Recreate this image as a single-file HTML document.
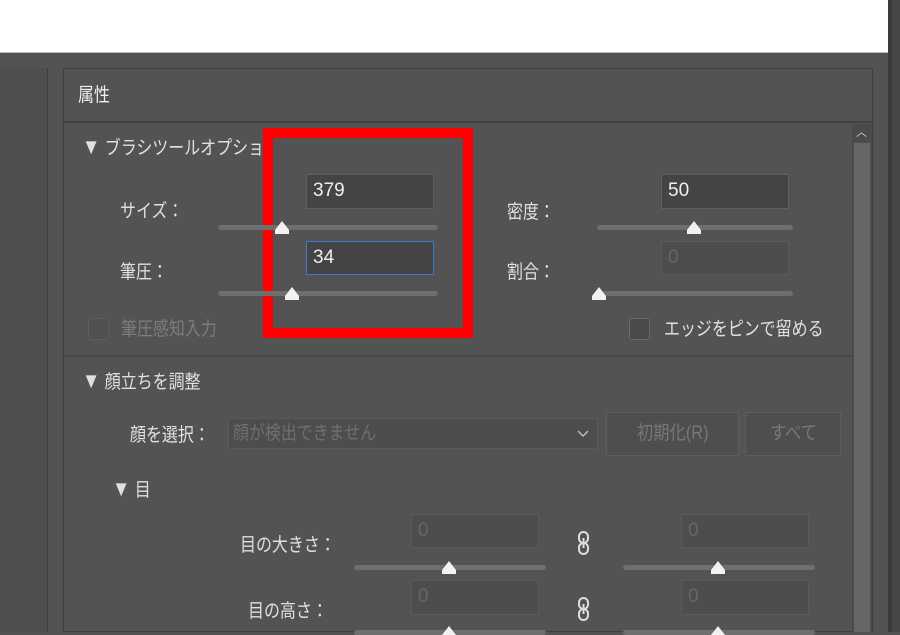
<!DOCTYPE html>
<html><head><meta charset="utf-8"><style>
body{margin:0;width:900px;height:632px;overflow:hidden;background:#535353;position:relative;font-family:"Liberation Sans","Noto Sans CJK JP",sans-serif;color:#e0e0e0;}
.a{position:absolute}
.t{position:absolute;font-size:19px;line-height:20px;white-space:nowrap;transform:scaleX(0.84);transform-origin:0 0}
.in{position:absolute;background:#444;border:1px solid #5f5f5f;box-sizing:border-box;font-size:19px;line-height:32px;padding-left:6px;color:#eee}
.dis{color:#666;background:#4d4d4d;border-color:#5a5a5a}
.tr{position:absolute;height:5px;background:#6e6e6e;border-radius:3px}
.th{position:absolute;width:0;height:0;border-left:7px solid transparent;border-right:7px solid transparent;border-bottom:9px solid #f2f2f2}
.thb{position:absolute;width:14px;height:4px;background:#f2f2f2}
.cb{position:absolute;width:21px;height:22px;border:1px solid #6a6a6a;border-radius:3px;background:#4a4a4a;box-sizing:border-box}
.btn{position:absolute;border:1px solid #5e5e5e;background:#4e4e4e;color:#777;font-size:19px;text-align:center;box-sizing:border-box}
.tri{font-size:22px}
</style></head><body>
<div class="a" style="left:0;top:0;width:888px;height:52px;background:#fff;border-bottom:1px solid #bbb"></div>
<div class="a" style="left:888px;top:0;width:12px;height:632px;background:#3a3a3a"></div>
<div class="a" style="left:892px;top:0;width:8px;height:632px;background:#474747"></div>
<div class="a" style="left:0;top:68px;width:47px;height:564px;background:#4f4f4f;border-right:1px solid #3c3c3c"></div>
<div class="a" style="left:63px;top:68px;width:810px;height:564px;border:1px solid #3f3f3f;box-sizing:border-box"></div>
<div class="a" style="left:64px;top:121px;width:808px;height:2px;background:#424242"></div>
<div class="t" style="left:78px;top:86px;color:#eee">属性</div>
<div class="a" style="left:852px;top:124px;width:20px;height:508px;background:#4b4b4b"></div>
<div class="a" style="left:854px;top:143px;width:16px;height:489px;background:#666"></div>
<div class="t" style="left:856px;top:122px;font-size:13px;color:#ccc">︿</div>
<div class="t" style="left:82px;top:137px"><span class="tri">▼</span> ブラシツールオプション</div>
<div class="a" style="left:263px;top:128px;width:210px;height:210px;border:10px solid #f00;box-sizing:border-box;background:#535353"></div>
<div class="t" style="left:120px;top:202px">サイズ：</div>
<div class="in" style="left:306px;top:174px;width:128px;height:35px">379</div>
<div class="tr" style="left:218px;top:225px;width:220px"></div>
<div class="th" style="left:275px;top:221px"></div><div class="thb" style="left:275px;top:230px"></div>
<div class="t" style="left:507px;top:203px">密度：</div>
<div class="in" style="left:661px;top:174px;width:128px;height:35px">50</div>
<div class="tr" style="left:597px;top:225px;width:196px"></div>
<div class="th" style="left:687px;top:221px"></div><div class="thb" style="left:687px;top:230px"></div>
<div class="t" style="left:120px;top:263px">筆圧：</div>
<div class="in" style="left:306px;top:241px;width:128px;height:34px;border-color:#3a7bd0;line-height:32px">34</div>
<div class="tr" style="left:218px;top:291px;width:220px"></div>
<div class="th" style="left:285px;top:287px"></div><div class="thb" style="left:285px;top:296px"></div>
<div class="t" style="left:507px;top:263px">割合：</div>
<div class="in dis" style="left:661px;top:241px;width:128px;height:34px">0</div>
<div class="tr" style="left:597px;top:291px;width:196px"></div>
<div class="th" style="left:592px;top:287px"></div><div class="thb" style="left:592px;top:296px"></div>
<div class="cb" style="left:88px;top:318px;border-color:#5d5d5d;background:#505050"></div>
<div class="t" style="left:121px;top:320px;color:#7c7c7c">筆圧感知入力</div>
<div class="cb" style="left:629px;top:318px"></div>
<div class="t" style="left:664px;top:320px">エッジをピンで留める</div>
<div class="a" style="left:64px;top:355px;width:788px;height:2px;background:#474747"></div>
<div class="t" style="left:82px;top:371px"><span class="tri">▼</span> 顔立ちを調整</div>
<div class="t" style="left:130px;top:426px">顔を選択：</div>
<div class="in dis" style="left:228px;top:418px;width:370px;height:31px;line-height:29px;color:#6f6f6f;padding-left:4px"><span style="display:inline-block;transform:scaleX(0.84);transform-origin:0 0">顔が検出できません</span>
<svg class="a" style="right:8px;top:11px" width="12" height="8"><path d="M1 1 L6 6 L11 1" stroke="#bbb" stroke-width="1.5" fill="none"/></svg></div>
<div class="btn" style="left:606px;top:412px;width:133px;height:44px;line-height:42px"><span style="display:inline-block;transform:scaleX(0.86)">初期化(R)</span></div>
<div class="btn" style="left:745px;top:412px;width:96px;height:44px;line-height:42px"><span style="display:inline-block;transform:scaleX(0.86)">すべて</span></div>
<div class="t" style="left:112px;top:479px"><span class="tri">▼</span> 目</div>
<div class="t" style="left:240px;top:536px">目の大きさ：</div>
<div class="in dis" style="left:411px;top:514px;width:128px;height:34px">0</div>
<svg class="a" style="left:576px;top:530px" width="16" height="26"><rect x="3" y="2" width="9" height="11" rx="4.5" stroke="#ddd" stroke-width="2" fill="none"/><rect x="3" y="13" width="9" height="11" rx="4.5" stroke="#ddd" stroke-width="2" fill="none"/><line x1="7.5" y1="8" x2="7.5" y2="18" stroke="#ddd" stroke-width="2"/></svg>
<div class="in dis" style="left:681px;top:514px;width:128px;height:34px">0</div>
<div class="tr" style="left:354px;top:565px;width:192px"></div>
<div class="th" style="left:442px;top:561px"></div><div class="thb" style="left:442px;top:570px"></div>
<div class="tr" style="left:623px;top:565px;width:192px"></div>
<div class="th" style="left:711px;top:561px"></div><div class="thb" style="left:711px;top:570px"></div>
<div class="t" style="left:248px;top:602px">目の高さ：</div>
<div class="in dis" style="left:411px;top:580px;width:128px;height:35px">0</div>
<svg class="a" style="left:576px;top:596px" width="16" height="26"><rect x="3" y="2" width="9" height="11" rx="4.5" stroke="#ddd" stroke-width="2" fill="none"/><rect x="3" y="13" width="9" height="11" rx="4.5" stroke="#ddd" stroke-width="2" fill="none"/><line x1="7.5" y1="8" x2="7.5" y2="18" stroke="#ddd" stroke-width="2"/></svg>
<div class="in dis" style="left:681px;top:580px;width:128px;height:35px">0</div>
<div class="tr" style="left:354px;top:630px;width:192px"></div>
<div class="th" style="left:442px;top:626px"></div>
<div class="tr" style="left:623px;top:630px;width:192px"></div>
<div class="th" style="left:711px;top:626px"></div>
</body></html>
